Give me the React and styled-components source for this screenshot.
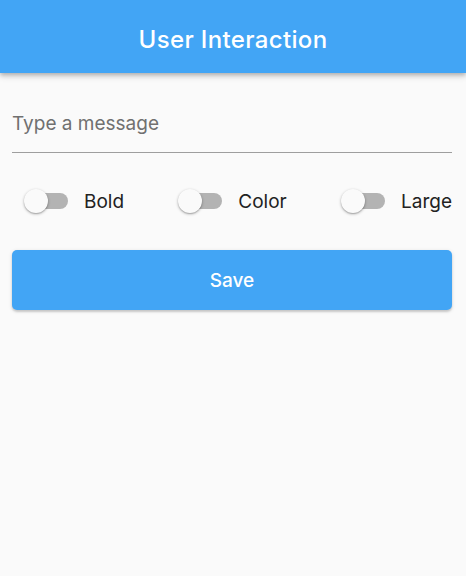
import React, { useState } from "react";
import styled, { createGlobalStyle } from "styled-components";

const Global = createGlobalStyle`
  html, body { margin: 0; padding: 0; background: #fafafa; }
  body { font-family: Inter, Roboto, "Noto Sans", sans-serif; -webkit-font-smoothing: antialiased; }
  * { box-sizing: border-box; }
`;

const Page = styled.div`
  width: 466px;
  height: 576px;
  background: #fafafa;
  display: flex;
  flex-direction: column;
  overflow: hidden;
`;

const AppBar = styled.header`
  height: 73px;
  background: #42a5f5;
  display: flex;
  align-items: center;
  justify-content: center;
  box-shadow: 0 2px 4px rgba(0,0,0,0.2), 0 4px 6px rgba(0,0,0,0.12);
  position: relative;
  z-index: 1;
`;

const Title = styled.h1`
  margin: 0;
  padding-top: 6px;
  color: #fff;
  font-family: Inter, Roboto, sans-serif;
  font-size: 24px;
  font-weight: 500;
  letter-spacing: 0.35px;
`;

const Body = styled.main`
  padding: 0 14px 0 12px;
  display: flex;
  flex-direction: column;
`;

const Field = styled.label`
  display: block;
  margin-top: 34px;
  border-bottom: 1.2px solid #9e9e9e;
  padding-bottom: 13px;
`;

const Input = styled.input`
  width: 100%;
  border: none;
  outline: none;
  background: transparent;
  font-family: Inter, Roboto, sans-serif;
  font-size: 19px;
  color: #222;
  padding: 0;
  height: 32px;
  &::placeholder { color: #707070; }
`;

const SwitchRow = styled.div`
  display: flex;
  justify-content: space-between;
  align-items: center;
  height: 48px;
  margin-top: 24px;
`;

const Group = styled.div`
  display: flex;
  align-items: center;
`;

const SwitchBox = styled.button`
  width: 71px;
  height: 48px;
  border: none;
  background: transparent;
  padding: 0;
  position: relative;
  cursor: pointer;
  flex: none;
`;

const Track = styled.span`
  position: absolute;
  left: 16px;
  top: 15.6px;
  width: 40px;
  height: 16.8px;
  border-radius: 8.4px;
  background: ${p => (p.$on ? "#90caf9" : "#b3b3b3")};
`;

const Thumb = styled.span`
  position: absolute;
  top: 12px;
  left: ${p => (p.$on ? "43px" : "12px")};
  width: 24px;
  height: 24px;
  border-radius: 50%;
  background: ${p => (p.$on ? "#42a5f5" : "#fafafa")};
  box-shadow: 0 1px 3px rgba(0,0,0,0.3), 0 1px 1px rgba(0,0,0,0.14);
`;

const Label = styled.span`
  margin-left: 1px;
  font-size: 19px;
  color: #222;
`;

const SaveButton = styled.button`
  margin-top: 25px;
  height: 60px;
  width: 100%;
  border: none;
  border-radius: 5px;
  background: #42a5f5;
  color: #fff;
  font-family: Inter, Roboto, sans-serif;
  font-size: 19px;
  font-weight: 500;
  box-shadow: 0 2px 2px rgba(0,0,0,0.14), 0 1px 4px rgba(0,0,0,0.12);
  cursor: pointer;
`;

function Toggle({ label }) {
  const [on, setOn] = useState(false);
  return (
    <Group>
      <SwitchBox onClick={() => setOn(!on)} aria-label={label}>
        <Track $on={on} />
        <Thumb $on={on} />
      </SwitchBox>
      <Label>{label}</Label>
    </Group>
  );
}

export default function App() {
  return (
    <Page>
      <Global />
      <AppBar>
        <Title>User Interaction</Title>
      </AppBar>
      <Body>
        <Field>
          <Input placeholder="Type a message" />
        </Field>
        <SwitchRow>
          <Toggle label="Bold" />
          <Toggle label="Color" />
          <Toggle label="Large" />
        </SwitchRow>
        <SaveButton>Save</SaveButton>
      </Body>
    </Page>
  );
}
